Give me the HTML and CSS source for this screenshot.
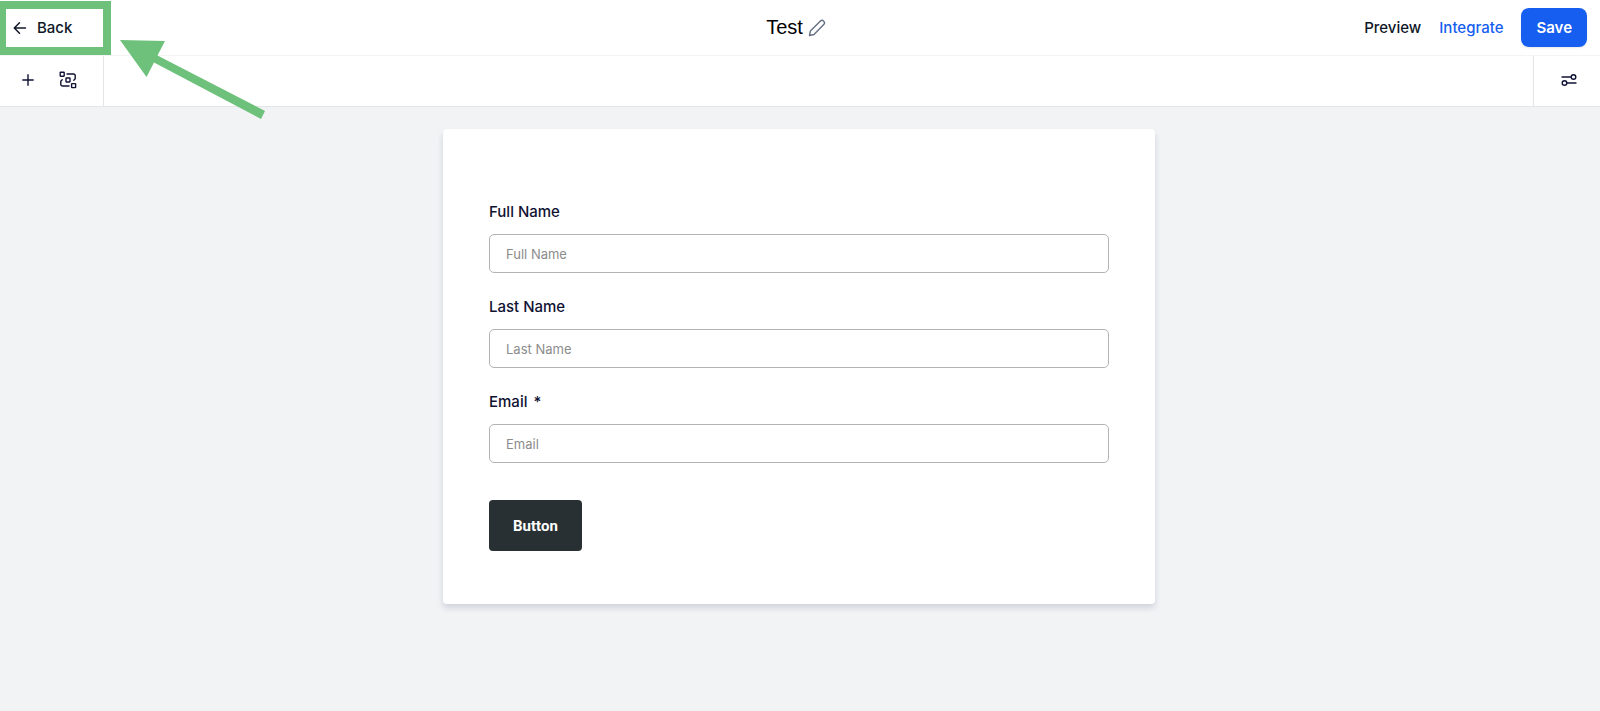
FILE: index.html
```html
<!DOCTYPE html>
<html lang="en">
<head>
    <meta charset="UTF-8">
    <meta name="viewport" content="width=device-width, initial-scale=1.0">
    <title>Test - Form Builder</title>
    <link rel="stylesheet" href="styles.css">
</head>
<body>
    <header class="topbar">
        <div class="topbar-left">
            <a href="#" class="back-link">
                <svg width="14" height="14" viewBox="0 0 14 14" fill="none" stroke="currentColor" stroke-width="1.5" stroke-linecap="round" stroke-linejoin="round" aria-hidden="true">
                    <path d="M12.5 7H1.5M6.5 1.8L1.3 7l5.2 5.2"/>
                </svg>
                Back
            </a>
        </div>

        <div class="topbar-title">
            <h1>Test</h1>
            <button class="icon-btn edit-btn" aria-label="Edit name">
                <svg width="18" height="18" viewBox="0 0 18 18" fill="none" stroke="currentColor" stroke-width="1.4" stroke-linejoin="round" aria-hidden="true">
                    <path d="M1.5 16.5l.9-4.5L12.2 2.2a2.3 2.3 0 0 1 3.5 3.4L6 15.5z"/>
                </svg>
            </button>
        </div>

        <nav class="topbar-actions">
            <a href="#" class="action-link">Preview</a>
            <a href="#" class="action-link primary">Integrate</a>
            <button class="save-btn">Save</button>
        </nav>
    </header>

    <div class="toolbar">
        <div class="toolbar-left">
            <button class="icon-btn" aria-label="Add element">
                <svg width="16" height="16" viewBox="0 0 16 16" fill="none" stroke="currentColor" stroke-width="1.4" stroke-linecap="round" aria-hidden="true">
                    <path d="M8 2.8v10.4M2.8 8h10.4"/>
                </svg>
            </button>
            <button class="icon-btn" aria-label="Form structure">
                <svg width="18" height="18" viewBox="0 0 18 18" fill="none" stroke="currentColor" stroke-width="1.4" stroke-linecap="round" stroke-linejoin="round" aria-hidden="true">
                    <rect x="1.2" y="1.2" width="4" height="4" rx=".4"/>
                    <rect x="7" y="7" width="4" height="4" rx=".4"/>
                    <rect x="12.6" y="12.6" width="4" height="4" rx=".4"/>
                    <path d="M8 3h6.4a1.800 1.800 0 0 1 1.800 1.800v3l-1.400 1.400M10 15H3.600a1.800 1.800 0 0 1-1.800-1.800v-3l1.400-1.400"/>
                </svg>
            </button>
        </div>
        <div class="toolbar-right">
            <button class="icon-btn" aria-label="Settings">
                <svg width="16" height="14" viewBox="0 0 16 14" fill="none" stroke="currentColor" stroke-width="1.4" stroke-linecap="round" aria-hidden="true">
                    <path d="M1 4h9M6 10h9"/>
                    <circle cx="12.5" cy="4" r="2.3"/>
                    <circle cx="3.5" cy="10" r="2.3"/>
                </svg>
            </button>
        </div>
    </div>

    <main class="canvas">
        <form class="form-card">
            <div class="field">
                <label for="fullName">Full Name</label>
                <input type="text" id="fullName" placeholder="Full Name">
            </div>
            <div class="field">
                <label for="lastName">Last Name</label>
                <input type="text" id="lastName" placeholder="Last Name">
            </div>
            <div class="field">
                <label for="email">Email <span class="required">*</span></label>
                <input type="email" id="email" placeholder="Email">
            </div>
            <button type="button" class="submit-btn">Button</button>
        </form>
    </main>

    <!-- Callout pointing at the back link -->
    <div class="callout-frame"></div>
    <svg class="callout-arrow" width="150" height="84" viewBox="0 0 150 84" aria-hidden="true">
        <path d="M0 0l45 1-7.5 14.5L145 71l-4 8L34 22.5 26.500 37z" fill="#6ec17b"/>
    </svg>
</body>
</html>
```

FILE: styles.css
```css
:root {
    --primary-color: #155eef;
    --text-color: #101233;
    --border-color: #e4e5e7;
    --callout-color: #6ec17b;
    --background-color: #f2f3f5;
}

* {
    box-sizing: border-box;
}

body {
    font-family: Inter, 'Helvetica Neue', Arial, sans-serif;
    background-color: var(--background-color);
    color: var(--text-color);
    margin: 0;
    min-height: 100vh;
}

button,
input {
    font-family: inherit;
}

.topbar {
    display: grid;
    grid-template-columns: 1fr auto 1fr;
    align-items: center;
    height: 56px;
    padding: 0 13px;
    background-color: white;
    border-bottom: 1px solid #f4f4f5;
}

.topbar-left {
    display: flex;
}

.back-link {
    display: inline-flex;
    align-items: center;
    gap: 10px;
    color: #101828;
    font-size: 15px;
    font-weight: 500;
    text-decoration: none;
}

.topbar-title {
    display: flex;
    align-items: center;
    gap: 5px;
    padding-right: 8px;
}

.topbar-title h1 {
    margin: 0;
    color: black;
    font-family: 'Liberation Sans', Arial, sans-serif;
    font-size: 20px;
    font-weight: 400;
}

.topbar-actions {
    display: flex;
    justify-content: flex-end;
    align-items: center;
    gap: 18px;
}

.action-link {
    color: #101828;
    font-size: 15px;
    font-weight: 500;
    text-decoration: none;
}

.action-link.primary {
    color: var(--primary-color);
}

.save-btn {
    height: 39px;
    padding: 0 15px;
    background-color: var(--primary-color);
    color: white;
    border: none;
    border-radius: 8px;
    font-size: 15px;
    font-weight: 600;
    cursor: pointer;
    box-shadow: 0 1px 2px rgba(16, 24, 40, 0.1);
}

.icon-btn {
    display: inline-flex;
    padding: 0;
    background: none;
    border: none;
    color: var(--text-color);
    cursor: pointer;
}

.edit-btn {
    color: #667085;
}

.toolbar {
    display: flex;
    justify-content: space-between;
    height: 51px;
    background-color: white;
    border-bottom: 1px solid var(--border-color);
}

.toolbar-left {
    display: flex;
    align-items: center;
    gap: 23px;
    width: 104px;
    padding: 0 0 2px 20px;
    border-right: 1px solid var(--border-color);
}

.toolbar-right {
    display: flex;
    align-items: center;
    padding: 0 23px 2px 27px;
    border-left: 1px solid var(--border-color);
}

.canvas {
    padding: 22px 18px 22px 16px;
}

.form-card {
    max-width: 712px;
    margin: 0 auto;
    padding: 73px 46px 53px;
    background-color: white;
    border-radius: 4px;
    box-shadow: 0 4px 6px rgba(16, 18, 80, 0.14);
}

.field {
    margin-bottom: 23px;
}

.field label {
    display: block;
    margin-bottom: 12px;
    font-size: 15px;
    font-weight: 500;
    line-height: 20px;
}

.field + .field label {
    padding-top: 1px;
}

.required {
    margin-left: 2px;
}

.field input {
    display: block;
    width: 100%;
    height: 39px;
    padding: 0 16px;
    background-color: white;
    border: 1px solid #b3b3b3;
    border-radius: 5px;
    color: var(--text-color);
    font-size: 13px;
}

.field input::placeholder {
    color: #8c8c8c;
}

.submit-btn {
    height: 51px;
    margin-top: 14px;
    padding: 0 24px;
    background-color: #293033;
    color: white;
    border: none;
    border-radius: 4px;
    font-family: Roboto, Arial, sans-serif;
    font-size: 15px;
    font-weight: 700;
    cursor: pointer;
}

.callout-frame {
    position: absolute;
    top: 1px;
    left: -2px;
    width: 113px;
    height: 54px;
    border: 8px solid var(--callout-color);
    pointer-events: none;
}

.callout-arrow {
    position: absolute;
    top: 40px;
    left: 120px;
    pointer-events: none;
}
```
